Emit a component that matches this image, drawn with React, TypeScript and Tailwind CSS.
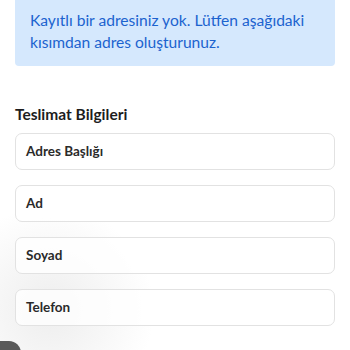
export default function App() {
	const fields = ['Adres Başlığı', 'Ad', 'Soyad', 'Telefon'];
	return (
		<div className="relative w-[350px] h-[350px] overflow-hidden bg-white font-['Lato',sans-serif]">
			<div className="absolute left-[-60px] bottom-[-60px] w-[220px] h-[200px] rounded-full bg-[radial-gradient(circle,_#e9e9e9_0%,_#ffffff_70%)] opacity-80"></div>
			<div className="relative px-[15px]">
				<div className="bg-[#d5e8fd] rounded-b-[4px] px-[15px] pt-[9px] pb-[13px] text-[#1c63cf] text-[15.6px] leading-[22px]">
					Kayıtlı bir adresiniz yok. Lütfen aşağıdaki kısımdan adres oluşturunuz.
				</div>
				<h2 className="mt-[38px] text-[15.5px] leading-[20px] font-bold text-[#1d1d1d]">
					Teslimat Bilgileri
				</h2>
				<div className="mt-[9px] flex flex-col gap-[15px]">
					{fields.map((f) => (
						<div
							key={f}
							className="h-[37px] flex items-center px-[10px] bg-white/80 border border-[#e2e2e2] rounded-[7px] text-[13.5px] font-bold text-[#2a2a2a]"
						>
							{f}
						</div>
					))}
				</div>
			</div>
			<div className="absolute left-[-14px] top-[341px] w-[35px] h-[30px] rounded-[12px] bg-[#5a5a5a]"></div>
		</div>
	);
}
